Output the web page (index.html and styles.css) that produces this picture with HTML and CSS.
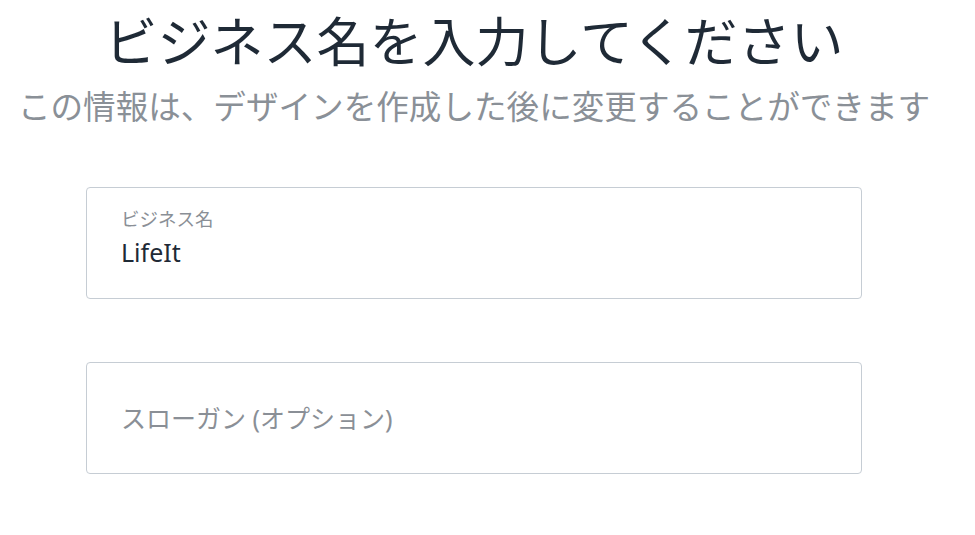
FILE: index.html
```html
<!DOCTYPE html>
<html>
<head>
	<title>ビジネス名を入力してください</title>
	<meta charset="utf-8">
	<link rel="stylesheet" href="styles.css">
</head>
<body>
	<div class="page">
		<div class="intro">
			<h1>ビジネス名を入力してください</h1>
			<p>この情報は、デザインを作成した後に変更することができます</p>
		</div>

		<form class="bizForm">
			<label class="field field-filled">
				<span class="field-label">ビジネス名</span>
				<input type="text" name="business-name" value="LifeIt">
			</label>
			<label class="field">
				<input type="text" name="slogan" placeholder="スローガン (オプション)">
			</label>
		</form>
	</div>
</body>
</html>
```

FILE: styles.css
```css
*{
	padding: 0;
	margin: 0;
	box-sizing: border-box;
}
body{
	background: #fff;
	font-family: "Noto Sans", "Noto Sans CJK JP", sans-serif;
	color: #1f2a36;
}
.page{
	width: 948px;
}
.intro{
	text-align: center;
	padding-top: 11px;
}
.intro h1{
	font-size: 53px;
	font-weight: 400;
	line-height: 62px;
	color: #1f2a36;
}
.intro p{
	font-size: 32.6px;
	line-height: 42px;
	color: #8a9097;
	margin-top: 13px;
}
.bizForm{
	width: 776px;
	margin: 59px auto 0;
	display: flex;
	flex-direction: column;
	gap: 63px;
}
.field{
	display: flex;
	flex-direction: column;
	justify-content: center;
	height: 112px;
	padding: 0 34px;
	border: 1px solid #c6cdd4;
	border-radius: 4px;
}
.field-filled{
	justify-content: flex-start;
	padding-top: 19px;
}
.field-label{
	font-size: 18.5px;
	line-height: 24px;
	color: #8a8f96;
}
.field input{
	border: none;
	outline: none;
	background: transparent;
	font-family: inherit;
	font-size: 25px;
	line-height: 32px;
	color: #1f2a36;
}
.field-filled input{
	margin-top: 5px;
}
.field input::placeholder{
	color: #8a8f96;
}
```
